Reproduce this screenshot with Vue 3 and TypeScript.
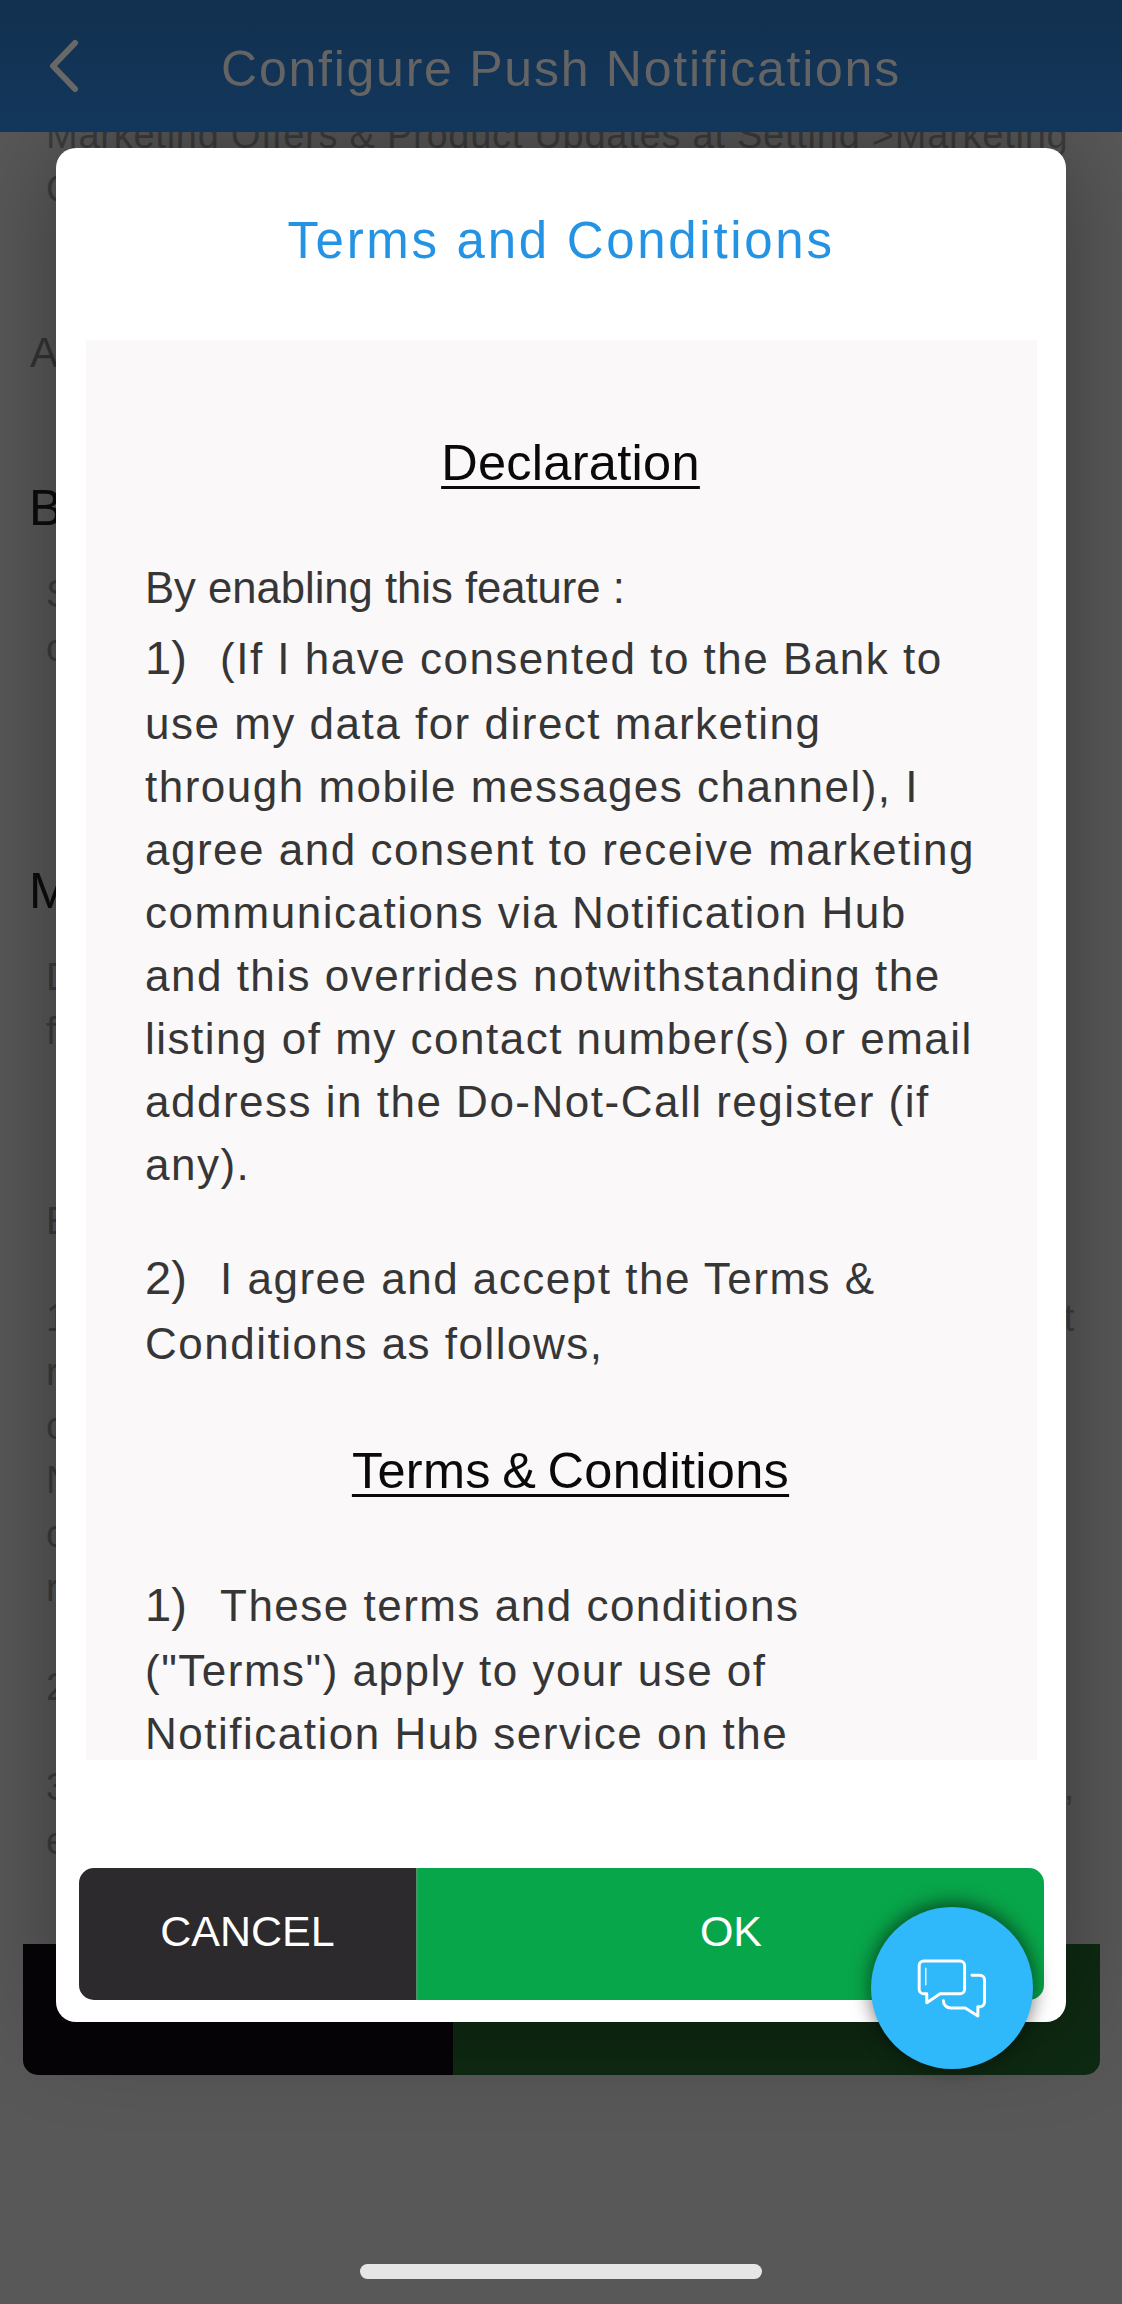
<script setup lang="ts">
interface BgLine {
  start: string
  end?: string
}
interface BgBlock {
  kind: 'body' | 'label' | 'title'
  gap: number
  lines: BgLine[]
}

const backdrop: BgBlock[] = [
  { kind: 'body', gap: 0, lines: [{ start: 'Marketing Offers & Product Updates at Setting >Marketing' }, { start: 'O' }] },
  { kind: 'label', gap: 110, lines: [{ start: 'A' }] },
  { kind: 'title', gap: 98, lines: [{ start: 'B' }] },
  { kind: 'body', gap: 29, lines: [{ start: 'S' }, { start: 'c' }] },
  { kind: 'title', gap: 186, lines: [{ start: 'M' }] },
  { kind: 'body', gap: 29, lines: [{ start: 'D' }, { start: 'f' }] },
  { kind: 'body', gap: 136, lines: [{ start: 'E' }] },
  {
    kind: 'body',
    gap: 43,
    lines: [{ start: '1', end: 't' }, { start: 'r' }, { start: 'c' }, { start: 'N' }, { start: 'c' }, { start: 'r' }]
  },
  { kind: 'body', gap: 45, lines: [{ start: '2' }] },
  { kind: 'body', gap: 46, lines: [{ start: '3', end: ',' }, { start: 'e' }] }
]
</script>

<template>
  <div class="screen">
    <header class="header">
      <svg class="chevron" width="32" height="56" viewBox="0 0 32 56" aria-hidden="true">
        <path d="M27 5 L5 28 L27 51" />
      </svg>
      <h1 class="header-title">Configure Push Notifications</h1>
    </header>

    <main class="content">
      <div
        v-for="(block, b) in backdrop"
        :key="b"
        class="bg-block"
        :class="block.kind"
        :style="{ marginTop: block.gap + 'px' }"
      >
        <p v-for="(line, l) in block.lines" :key="l" class="bg-line">
          <span>{{ line.start }}</span>
          <span v-if="line.end">{{ line.end }}</span>
        </p>
      </div>
    </main>

    <div class="page-actions">
      <div class="page-action dark"></div>
      <div class="page-action green"></div>
    </div>

    <div class="home-area"><span class="home-bar"></span></div>

    <section class="modal">
      <h2 class="modal-title">Terms and Conditions</h2>
      <div class="terms">
        <h3 class="terms-heading first">Declaration</h3>
        <p class="lead">By enabling this feature :</p>
        <p class="clause tight">
          <span class="num">1)</span>(If I have consented to the Bank to use my data for direct marketing through
          mobile messages channel), I agree and consent to receive marketing communications via Notification Hub and
          this overrides notwithstanding the listing of my contact number(s) or email address in the Do-Not-Call
          register (if any).
        </p>
        <p class="clause second">
          <span class="num">2)</span>I agree and accept the Terms &amp; Conditions as follows,
        </p>
        <h3 class="terms-heading conditions">Terms &amp; Conditions</h3>
        <p class="clause third">
          <span class="num">1)</span>These terms and conditions ("Terms") apply to your use of Notification Hub
          service on the
        </p>
      </div>
      <div class="modal-actions">
        <button class="btn cancel" type="button">CANCEL</button>
        <button class="btn ok" type="button">OK</button>
      </div>
    </section>

    <button class="chat-fab" type="button" aria-label="Chat">
      <svg width="74" height="63" viewBox="225 228 222 190" aria-hidden="true">
        <path
          class="bubble"
          d="M251 240 H360 a14 14 0 0 1 14 14 V325 a14 14 0 0 1 -14 14 H300 L260 366 V339 H251 a14 14 0 0 1 -14 -14 V254 a14 14 0 0 1 14 -14 Z"
        />
        <path class="bubble" d="M396 283 H420 a14 14 0 0 1 14 14 V364 a14 14 0 0 1 -14 14 H414 V406 L376 382 H332 a22 22 0 0 1 -22 -22" />
        <path class="glint" d="M257 262 V312" />
      </svg>
    </button>
  </div>
</template>

<style>
html,
body {
  margin: 0;
  background: #585858;
}
</style>

<style scoped>
.screen {
  position: relative;
  display: flex;
  flex-direction: column;
  width: 1122px;
  height: 2304px;
  overflow: hidden;
  background: #585858;
  font-family: "Liberation Sans", Arial, sans-serif;
}

.header {
  position: relative;
  z-index: 3;
  flex: none;
  display: grid;
  grid-template-columns: 1fr auto 1fr;
  align-items: center;
  height: 132px;
  background: linear-gradient(#12304f, #12375c);
}
.chevron {
  margin-left: 48px;
}
.chevron path {
  fill: none;
  stroke: #686868;
  stroke-width: 6;
  stroke-linecap: round;
  stroke-linejoin: round;
}
.header-title {
  margin: 0;
  padding-top: 5px;
  font-size: 50px;
  font-weight: 400;
  line-height: 60px;
  letter-spacing: 1.75px;
  color: #646464;
  white-space: nowrap;
}

.content {
  flex: none;
  width: 1029px;
  height: 1836px;
  margin-top: -24px;
  overflow: hidden;
  padding: 0 47px 0 46px;
}
.bg-line {
  display: flex;
  justify-content: space-between;
  margin: 0;
  white-space: nowrap;
}
.bg-block.body {
  font-size: 38px;
  line-height: 54px;
  letter-spacing: 0.75px;
  color: #3c3c3c;
}
.bg-block.label {
  margin-left: -16px;
  font-size: 42px;
  line-height: 54px;
  color: #333;
}
.bg-block.title {
  margin-left: -17px;
  font-size: 50px;
  line-height: 60px;
  color: #0c0c0c;
}

.page-actions {
  flex: none;
  display: grid;
  grid-template-columns: 430px 1fr;
  height: 131px;
  margin: 0 22px 0 23px;
  border-radius: 0 0 15px 15px;
  overflow: hidden;
}
.page-action.dark {
  background: #060406;
}
.page-action.green {
  background: #0e2a12;
}

.home-area {
  flex: 1;
  display: flex;
  justify-content: center;
  padding-top: 189px;
}
.home-bar {
  width: 402px;
  height: 15px;
  border-radius: 8px;
  background: #e6e6e6;
}

.modal {
  position: absolute;
  z-index: 2;
  top: 148px;
  left: 56px;
  display: flex;
  flex-direction: column;
  width: 1010px;
  height: 1874px;
  box-sizing: border-box;
  border-radius: 20px;
  background: #fff;
  box-shadow: 0 0 100px rgba(0, 0, 0, 0.34);
}
.modal-title {
  flex: none;
  height: 192px;
  box-sizing: border-box;
  margin: 0;
  padding-top: 63px;
  font-size: 51px;
  font-weight: 400;
  line-height: 60px;
  letter-spacing: 2.7px;
  text-align: center;
  color: #2593e4;
}

.terms {
  flex: none;
  height: 1420px;
  margin: 0 29px 0 30px;
  padding: 93px 57px 0 59px;
  box-sizing: border-box;
  overflow: hidden;
  background: #faf8f9;
}
.terms-heading {
  margin: 0 -16px 0 0;
  font-size: 50.5px;
  font-weight: 400;
  line-height: 60px;
  letter-spacing: 0.3px;
  word-spacing: -3px;
  text-align: center;
  color: #0a0a0a;
  text-decoration: underline;
  text-decoration-thickness: 3px;
  text-underline-offset: 6px;
}
.terms-heading.conditions {
  margin-top: 66px;
}
.lead {
  margin: 64px 0 0;
  font-size: 43.6px;
  line-height: 63px;
  color: #363636;
}
.clause {
  margin: 0;
  font-size: 44px;
  line-height: 63px;
  letter-spacing: 1.5px;
  color: #363636;
}
.clause.tight {
  margin-top: 7px;
}
.clause.second {
  margin-top: 51px;
}
.clause.third {
  margin-top: 73px;
}
.num {
  display: inline-block;
  width: 75px;
  padding-bottom: 8px;
  font-size: 47px;
  line-height: 52px;
  letter-spacing: 0;
}

.modal-actions {
  flex: none;
  display: grid;
  grid-template-columns: 337px 1fr;
  height: 132px;
  margin: 108px 22px 0 23px;
  border-radius: 15px;
  overflow: hidden;
}
.btn {
  border: 0;
  padding: 0 0 6px;
  font-family: inherit;
  font-size: 43px;
  color: #fff;
}
.cancel {
  background: #2c2a2c;
}
.ok {
  background: #08a64a;
  border-left: 2px solid #4f8f68;
}

.chat-fab {
  position: absolute;
  z-index: 4;
  top: 1907px;
  left: 871px;
  display: flex;
  align-items: center;
  justify-content: center;
  width: 162px;
  height: 162px;
  padding: 0;
  border: 0;
  border-radius: 50%;
  background: #2fb8fa;
  box-shadow: 0 -3px 20px rgba(0, 0, 0, 0.6);
}
.bubble {
  fill: none;
  stroke: #fff;
  stroke-width: 9;
  stroke-linejoin: round;
  stroke-linecap: round;
}
.glint {
  fill: none;
  stroke: #fff;
  stroke-width: 4;
  stroke-linecap: round;
}
</style>
